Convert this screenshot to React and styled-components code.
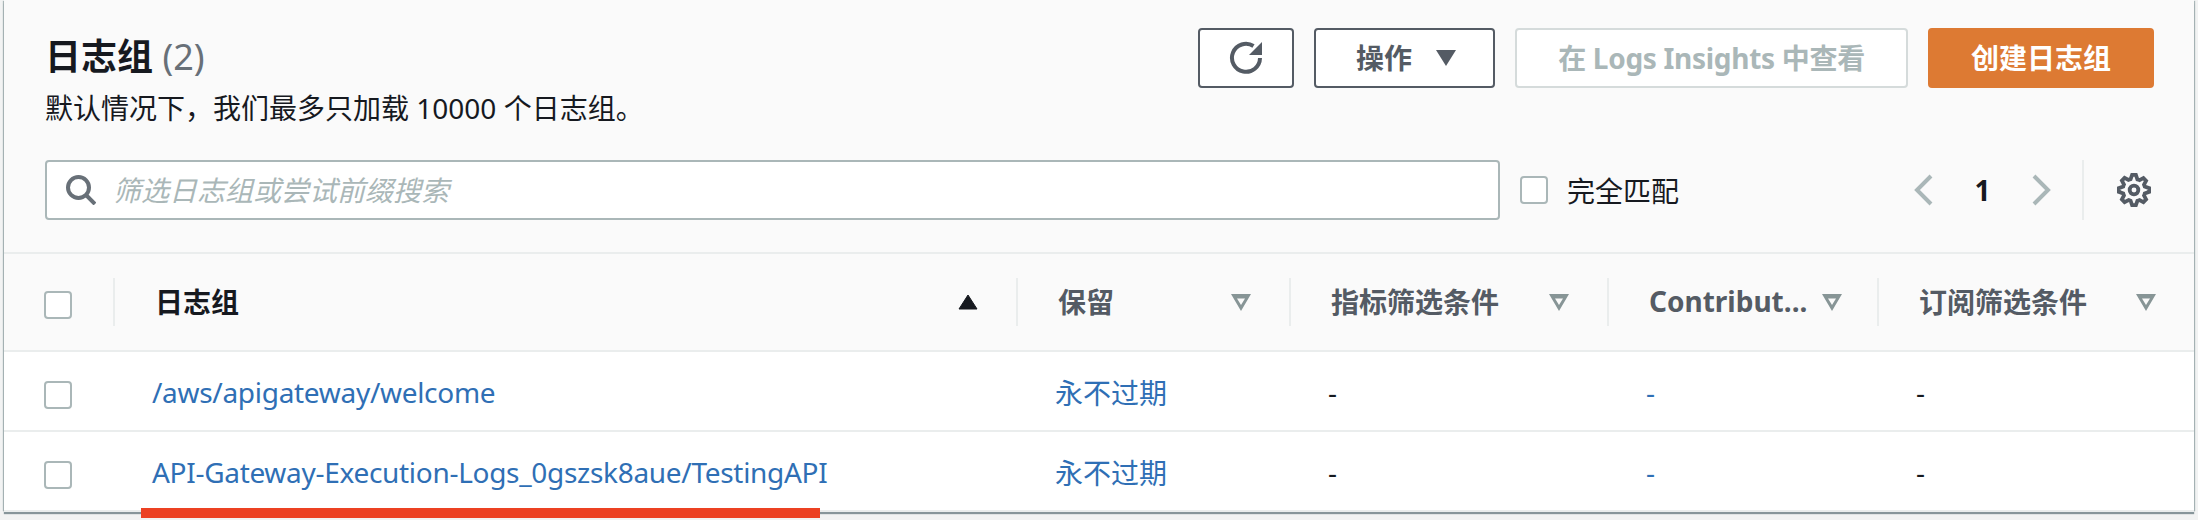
import React from 'react';
import styled, {createGlobalStyle} from 'styled-components';

const GlobalStyle = createGlobalStyle`
  html, body {
    margin: 0;
    height: 100%;
    background: #f2f3f3;
  }
  body {
    font-family: "Noto Sans", "Noto Sans CJK SC", sans-serif;
    font-size: 28px;
    color: #16191f;
  }
`;

const columns = [
  {title: '日志组', sorted: true},
  {title: '保留'},
  {title: '指标筛选条件'},
  {title: 'Contribut...'},
  {title: '订阅筛选条件'},
];

const rows = [
  {name: '/aws/apigateway/welcome', highlighted: false},
  {name: 'API-Gateway-Execution-Logs_0gszsk8aue/TestingAPI', highlighted: true},
];

const RefreshIcon = () => (
  <svg width="34" height="34" viewBox="0 0 34 34" aria-hidden="true">
    <path d="M31 18a14 14 0 1 1-6.5-12" fill="none" stroke="currentColor" strokeWidth="4" />
    <path d="M33 2v13H20z" fill="currentColor" />
  </svg>
);

const SearchIcon = () => (
  <svg width="30" height="30" viewBox="0 0 30 30" aria-hidden="true">
    <circle cx="12.500" cy="12.500" r="10.500" fill="none" stroke="#687078" strokeWidth="4" />
    <path d="M20 20l9 9" stroke="#687078" strokeWidth="4" />
  </svg>
);

const ChevronIcon = ({next}) => (
  <svg width="20" height="32" viewBox="0 0 20 32" aria-hidden="true">
    <path
      d={next ? 'M3 2l14 14L3 30' : 'M17 2L3 16l14 14'}
      fill="none"
      stroke="#aab7b8"
      strokeWidth="4"
    />
  </svg>
);

const GearIcon = () => (
  <svg width="34" height="34" viewBox="-1 -1 18 18" aria-hidden="true">
    <path
      d="M13.300 5.200l1.100-2.100L13 1.700l-2.100 1.100c-.4-.2-.7-.3-1.100-.4L9 0H7l-.8 2.300c-.4.100-.7.300-1.100.4L3 1.600 1.600 3l1.100 2.100c-.2.400-.3.700-.4 1.100L0 7v2l2.300.8c.1.400.3.700.4 1.100L1.600 13 3 14.400l2.100-1.100c.4.200.7.300 1.100.4L7 16h2l.8-2.300c.4-.1.700-.3 1.100-.4l2.100 1.100 1.400-1.400-1.100-2.100c.2-.4.3-.7.4-1.100L16 9V7l-2.300-.8c-.1-.4-.3-.7-.4-1z"
      fill="none"
      stroke="#545b64"
      strokeWidth="2"
    />
    <circle cx="8" cy="8" r="2.300" fill="none" stroke="#545b64" strokeWidth="2" />
  </svg>
);

const SortIcon = () => (
  <svg width="20" height="16" viewBox="0 0 20 16" aria-hidden="true">
    <path d="M10 1l9 14H1z" fill="#16191f" stroke="#16191f" strokeLinejoin="round" />
  </svg>
);

const FilterIcon = () => (
  <svg width="20" height="17" viewBox="0 0 20 17" aria-hidden="true">
    <path d="M0 0h20L10 17zM6 4.500l4 6.500 4-6.500z" fill="#879596" fillRule="evenodd" />
  </svg>
);

const App = () => {
  return (
    <Page>
      <GlobalStyle />
      <Panel>
        <Header>
          <TopRow>
            <div>
              <Title>
                日志组 <Count>(2)</Count>
              </Title>
              <Description>默认情况下，我们最多只加载 10000 个日志组。</Description>
            </div>
            <Actions>
              <Button $width={96}>
                <RefreshIcon />
              </Button>
              <Button $width={181} $shift={3}>
                操作
                <Caret />
              </Button>
              <Button $width={393} $variant="disabled">
                在 Logs Insights 中查看
              </Button>
              <Button $width={226} $variant="primary">
                创建日志组
              </Button>
            </Actions>
          </TopRow>
          <FilterRow>
            <Search>
              <SearchIcon />
              <SearchInput placeholder="筛选日志组或尝试前缀搜索" />
            </Search>
            <Match>
              <Checkbox type="checkbox" />
              完全匹配
            </Match>
            <Pager>
              <ChevronIcon />
              <PageNumber>1</PageNumber>
              <ChevronIcon next />
            </Pager>
            <Settings>
              <GearIcon />
            </Settings>
          </FilterRow>
        </Header>
        <HeadRow>
          <SelectCell>
            <Checkbox type="checkbox" $offset={6} />
          </SelectCell>
          {columns.map((column) => (
            <HeadCell key={column.title}>
              <HeadLabel $sorted={column.sorted}>{column.title}</HeadLabel>
              {column.sorted ? <SortIcon /> : <FilterIcon />}
            </HeadCell>
          ))}
        </HeadRow>
        {rows.map((row) => (
          <BodyRow key={row.name}>
            <SelectCell>
              <Checkbox type="checkbox" $offset={8} />
            </SelectCell>
            <BodyCell>
              <LogLink href="#" $tight>
                {row.name}
              </LogLink>
            </BodyCell>
            <BodyCell>
              <LogLink href="#">永不过期</LogLink>
            </BodyCell>
            <BodyCell>-</BodyCell>
            <BodyCell>
              <LogLink href="#">-</LogLink>
            </BodyCell>
            <BodyCell>-</BodyCell>
            {row.highlighted ? <Highlight /> : null}
          </BodyRow>
        ))}
      </Panel>
    </Page>
  );
};

const Page = styled.div`
  padding: 0 4px;
`;

const Panel = styled.section`
  background: #fff;
  box-shadow: 0 2px 0 #eaeded, 0 4px 1px #87959a, -1px 1px 1px #aab7b8, 1px 1px 1px #aab7b8;
`;

const Header = styled.header`
  background: #fafafa;
  padding: 28px 40px 32px 41px;
  border-bottom: 2px solid #eaeded;
`;

const TopRow = styled.div`
  display: flex;
  justify-content: space-between;
`;

const Title = styled.h2`
  margin: 0;
  font-size: 36px;
  line-height: 58px;
  font-weight: 700;
`;

const Count = styled.span`
  font-weight: 400;
  color: #687078;
`;

const Description = styled.p`
  margin: 4px 0 0;
  line-height: 36px;
`;

const Actions = styled.div`
  display: flex;
  gap: 20px;
`;

const Button = styled.button`
  display: flex;
  align-items: center;
  justify-content: center;
  box-sizing: border-box;
  width: ${(p) => p.$width}px;
  height: 60px;
  padding: 0 0 2px ${(p) => p.$shift || 0}px;
  border-radius: 4px;
  border: 2px solid ${(p) => (p.$variant === 'disabled' ? '#d5dbdb' : p.$variant === 'primary' ? '#dd7a33' : '#545b64')};
  background: ${(p) => (p.$variant === 'primary' ? '#dd7a33' : '#fff')};
  color: ${(p) => (p.$variant === 'disabled' ? '#aab7b8' : p.$variant === 'primary' ? '#fff' : '#545b64')};
  font: 700 28px "Noto Sans", "Noto Sans CJK SC", sans-serif;
  letter-spacing: ${(p) => (p.$variant === 'disabled' ? '-0.3px' : '0')};
`;

const Caret = styled.span`
  width: 0;
  height: 0;
  margin: 2px 0 0 24px;
  border-left: 10px solid transparent;
  border-right: 10px solid transparent;
  border-top: 16px solid currentColor;
`;

const FilterRow = styled.div`
  display: flex;
  align-items: center;
  margin-top: 34px;
  height: 60px;
`;

const Search = styled.label`
  display: flex;
  align-items: center;
  gap: 17px;
  box-sizing: border-box;
  width: 1455px;
  height: 60px;
  padding: 0 18px 0 19px;
  background: #fff;
  border: 2px solid #aab7b8;
  border-radius: 4px;
`;

const SearchInput = styled.input`
  flex: 1;
  border: 0;
  padding: 0;
  outline: 0;
  background: transparent;
  font: 28px "Noto Sans", "Noto Sans CJK SC", sans-serif;
  &::placeholder {
    color: #aab7b8;
    font-style: italic;
    opacity: 1;
  }
`;

const Match = styled.label`
  display: flex;
  align-items: center;
  gap: 19px;
  margin-left: 20px;
`;

const Checkbox = styled.input`
  appearance: none;
  box-sizing: border-box;
  display: block;
  flex: none;
  width: 28px;
  height: 28px;
  margin: ${(p) => p.$offset || 0}px 0 0;
  background: #fff;
  border: 2px solid #aab7b8;
  border-radius: 4px;
`;

const Pager = styled.div`
  display: flex;
  align-items: center;
  margin-left: auto;
  margin-right: 31px;
`;

const PageNumber = styled.span`
  width: 97px;
  text-align: center;
  font-weight: 700;
`;

const Settings = styled.div`
  display: flex;
  align-items: center;
  box-sizing: border-box;
  height: 60px;
  padding-left: 33px;
  margin-right: 3px;
  border-left: 2px solid #eaeded;
`;

const tableColumns = '109px 903px 273px 318px 270px 317px';

const HeadRow = styled.div`
  display: grid;
  grid-template-columns: ${tableColumns};
  align-items: center;
  height: 96px;
  background: #fafafa;
  border-bottom: 2px solid #eaeded;
`;

const SelectCell = styled.div`
  padding-left: 40px;
`;

const HeadCell = styled.div`
  display: flex;
  align-items: center;
  justify-content: space-between;
  gap: 15px;
  box-sizing: border-box;
  height: 48px;
  padding: 0 38px 2px 40px;
  border-left: 2px solid #eaeded;
  svg {
    flex: none;
    margin-top: 2px;
  }
`;

const HeadLabel = styled.span`
  white-space: nowrap;
  font-weight: 700;
  color: ${(p) => (p.$sorted ? '#16191f' : '#545b64')};
`;

const BodyRow = styled.div`
  position: relative;
  display: grid;
  grid-template-columns: ${tableColumns};
  align-items: center;
  height: 78px;
  & + & {
    border-top: 2px solid #eaeded;
  }
`;

const BodyCell = styled.div`
  padding: 2px 0 0 39px;
`;

const LogLink = styled.a`
  color: #2f6fb5;
  text-decoration: none;
  letter-spacing: ${(p) => (p.$tight ? '-0.3px' : '0')};
`;

const Highlight = styled.div`
  position: absolute;
  left: 137px;
  bottom: -8px;
  width: 679px;
  height: 10px;
  background: #ec4123;
`;

export default App;
